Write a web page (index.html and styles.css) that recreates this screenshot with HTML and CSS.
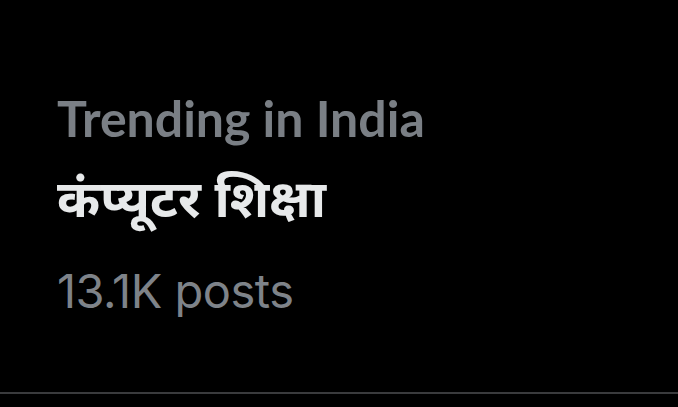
FILE: index.html
```html
<!DOCTYPE html>
<html>
<head>
<meta charset="utf-8">
<link rel="stylesheet" href="styles.css">
</head>
<body>
<div class="trend">
  <div class="context">Trending in India</div>
  <div class="topic">कंप्यूटर शिक्षा</div>
  <div class="count">13.1K posts</div>
</div>
</body>
</html>
```
FILE: styles.css
```css
html, body {
  margin: 0;
  padding: 0;
  background: #000;
  width: 678px;
  height: 407px;
  overflow: hidden;
}
.trend {
  box-sizing: border-box;
  height: 394px;
  padding: 88px 0 0 57px;
  border-bottom: 2px solid #3a3b3d;
  display: flex;
  flex-direction: column;
}
.context {
  font-family: "Lato", sans-serif;
  font-weight: 700;
  font-size: 50px;
  line-height: 60px;
  color: #7a7f85;
}
.topic {
  font-family: "Noto Sans Devanagari", "Lato", sans-serif;
  font-weight: 700;
  font-size: 52px;
  line-height: 113px;
  color: #e7e9ea;
}
.count {
  font-family: "Inter", sans-serif;
  font-weight: 400;
  font-size: 47px;
  line-height: 60px;
  color: #7e8389;
  letter-spacing: -0.5px;
}
```
